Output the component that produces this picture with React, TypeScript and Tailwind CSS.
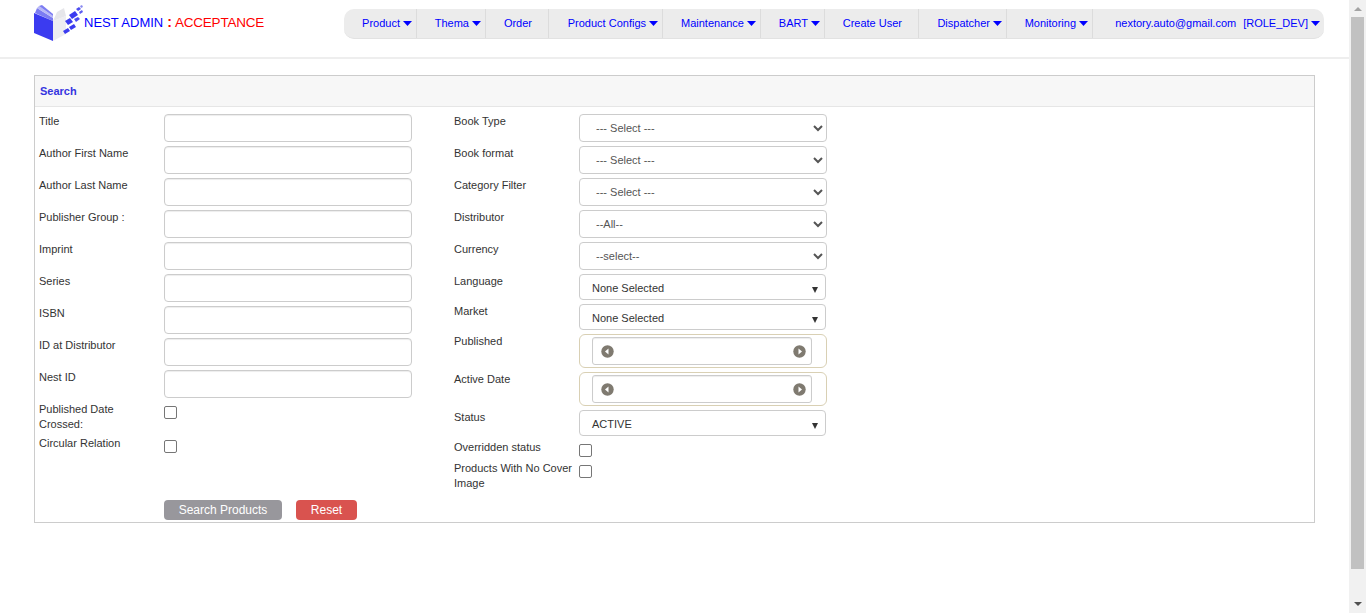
import React from "react";

const navItems = [
  { label: "Product", w: "w-[73px]", caret: true },
  { label: "Thema", w: "w-[69px]", caret: true },
  { label: "Order", w: "w-[63px]", caret: false },
  { label: "Product Configs", w: "w-[114px]", caret: true },
  { label: "Maintenance", w: "w-[98px]", caret: true },
  { label: "BART", w: "w-[64px]", caret: true },
  { label: "Create User", w: "w-[94px]", caret: false },
  { label: "Dispatcher", w: "w-[88px]", caret: true },
  { label: "Monitoring", w: "w-[86px]", caret: true },
];

const leftFields = [
  "Title",
  "Author First Name",
  "Author Last Name",
  "Publisher Group :",
  "Imprint",
  "Series",
  "ISBN",
  "ID at Distributor",
  "Nest ID",
];

const selectFields = [
  { label: "Book Type", value: "--- Select ---" },
  { label: "Book format", value: "--- Select ---" },
  { label: "Category Filter", value: "--- Select ---" },
  { label: "Distributor", value: "--All--" },
  { label: "Currency", value: "--select--" },
];

const Caret = () => (
  <svg width="9" height="5" viewBox="0 0 9 5" className="ml-[3px] shrink-0">
    <path d="M0 0h9L4.500 5z" fill="#0000ff" />
  </svg>
);

const Logo = () => (
  <svg width="52" height="38" viewBox="0 0 52 38" className="shrink-0">
    {/* right page */}
    <path d="M21 17L34 12V30L21 37z" fill="#ededf1" />
    <path d="M21 17L25 8L32 4L34 12z" fill="#e6e6ea" />
    {/* fanned pages */}
    <path d="M5 4L21 14V17L3 9z" fill="#7c7cf2" />
    <path d="M7 2L21 12V14L5 4z" fill="#b8b8f6" />
    <path d="M10 1L21 10V12L7 2z" fill="#7c7cf2" />
    {/* cover */}
    <path d="M2 9L21 17V37L2 29z" fill="#3b3bf0" />
    {/* scattered pixels */}
    <path d="M37 11l6-4 3 4-6 4z" fill="#3b3bf0" />
    <path d="M44 5l3-2 2 2-3 2z" fill="#4c4cf0" />
    <path d="M48 2l2-1 1 2-2 1z" fill="#8a8af0" />
    <path d="M47 8l3-2 1 2-3 2z" fill="#5c5cf0" />
    <path d="M33 17l5-3 3 4-5 3z" fill="#3b3bf0" />
    <path d="M42 15l4-2 2 2-4 3z" fill="#4c4cf0" />
    <path d="M37 23l5-3 2 3-5 3z" fill="#3b3bf0" />
    <path d="M31 27l5-3 2 3-5 3z" fill="#3b3bf0" />
  </svg>
);

const Label = ({ children }: { children: React.ReactNode }) => (
  <label className="block text-[11px] leading-[15px] text-[#333]">{children}</label>
);

const Check = () => (
  <span className="block w-[13px] h-[13px] rounded-[2px] border border-[#767676] bg-white" />
);

const NativeSelect = ({ value }: { value: string }) => (
  <select
    defaultValue={value}
    className="block w-[248px] h-[28px] px-3 text-[11px] text-[#555] bg-white border border-[#ccc] rounded-[4px]"
  >
    <option>{value}</option>
  </select>
);

const DropBox = ({ value }: { value: string }) => (
  <div className="flex items-center justify-between w-[247px] h-[26px] pl-3 pr-[7px] bg-white border border-[#ccc] rounded-[4px] text-[11px] text-[#333]">
    <span className="mt-[2px]">{value}</span>
    <span className="mt-[6px] w-0 h-0 border-x-[3px] border-t-[6px] border-x-transparent border-t-[#333]" />
  </div>
);

const RoundArrow = ({ dir }: { dir: "left" | "right" }) => (
  <svg width="13" height="13" viewBox="0 0 13 13">
    <circle cx="6.500" cy="6.500" r="6.200" fill="#7f7a70" />
    <path d={dir === "left" ? "M7.500 3.500v6L4 6.500z" : "M5.500 3.500v6L9 6.500z"} fill="#fff" />
  </svg>
);

const DatePick = () => (
  <div className="w-[248px] h-[34px] flex items-center pl-[12px] border border-[#d9d0b4] rounded-[6px] bg-white">
    <div className="w-[220px] h-[28px] flex items-center justify-between pl-[8px] pr-[5px] border border-[#ccc] rounded-[3px] shadow-[inset_0_1px_1px_rgba(0,0,0,0.075)]">
      <RoundArrow dir="left" />
      <RoundArrow dir="right" />
    </div>
  </div>
);

export default function App() {
  return (
    <div className="flex h-[613px] overflow-hidden bg-white font-['Liberation_Sans',Arial,sans-serif]">
      <div className="flex-1 min-w-0">
        <header className="flex h-[59px] pl-[32px] pr-[25px] border-b-2 border-[#eee]">
          <div className="flex h-[44px] items-start pt-[4px]">
            <Logo />
            <span className="mt-[9px] flex items-baseline leading-[18px] whitespace-nowrap">
              <span className="text-[13px] text-[#0000ff]">NEST ADMIN</span>
              <span className="ml-[4px] text-[14px] font-bold text-[#ff0000]">:</span>
              <span className="ml-[3px] text-[13.5px] tracking-[-0.2px] text-[#ff0000]">ACCEPTANCE</span>
            </span>
          </div>
          <nav className="ml-auto mt-[9px] flex h-[30px] w-[980px] rounded-[10px] bg-[#ececec] border-b border-[#e2e2e2] text-[11px] text-[#0000ff]">
            {navItems.map((item) => (
              <div
                key={item.label}
                className={`${item.w} flex items-center justify-end border-r border-[#dcdcdc] whitespace-nowrap ${item.caret ? "pr-[4px]" : "pr-[16px]"}`}
              >
                {item.label}
                {item.caret && <Caret />}
              </div>
            ))}
            <div className="flex-1 flex items-center justify-end pr-[4px] whitespace-nowrap">
              <span>nextory.auto@gmail.com</span>
              <span className="ml-[7px]">[ROLE_DEV]</span>
              <Caret />
            </div>
          </nav>
        </header>

        <section className="mx-[34px] mt-[16px] h-[448px] border border-[#ccc]">
          <div className="h-[31px] flex items-center pl-[5px] bg-[#f7f7f7] border-b border-[#e6e6e6] text-[11px] font-bold text-[#3535e0]">
            Search
          </div>
          <div className="flex pt-[7px]">
            <div className="w-[419px] pl-[4px] shrink-0">
              <div className="flex flex-col gap-1">
                {leftFields.map((f) => (
                  <div key={f} className="flex h-[28px]">
                    <div className="w-[125px]">
                      <Label>{f}</Label>
                    </div>
                    <input className="w-[248px] h-[28px] bg-white border border-[#ccc] rounded-[4px] shadow-[inset_0_1px_1px_rgba(0,0,0,0.075)]" />
                  </div>
                ))}
              </div>
              <div className="flex mt-[8px] h-[34px]">
                <div className="w-[125px] -mt-[4px]">
                  <Label>
                    Published Date
                    <br />
                    Crossed:
                  </Label>
                </div>
                <Check />
              </div>
              <div className="flex">
                <div className="w-[125px] -mt-[4px]">
                  <Label>Circular Relation</Label>
                </div>
                <Check />
              </div>
            </div>

            <div className="w-[373px] shrink-0">
              <div className="flex flex-col gap-1">
                {selectFields.map((f) => (
                  <div key={f.label} className="flex h-[28px]">
                    <div className="w-[125px]">
                      <Label>{f.label}</Label>
                    </div>
                    <NativeSelect value={f.value} />
                  </div>
                ))}
              </div>
              <div className="flex mt-[4px] h-[30px]">
                <div className="w-[125px]">
                  <Label>Language</Label>
                </div>
                <DropBox value="None Selected" />
              </div>
              <div className="flex h-[30px]">
                <div className="w-[125px]">
                  <Label>Market</Label>
                </div>
                <DropBox value="None Selected" />
              </div>
              <div className="flex h-[38px]">
                <div className="w-[125px]">
                  <Label>Published</Label>
                </div>
                <DatePick />
              </div>
              <div className="flex h-[38px]">
                <div className="w-[125px]">
                  <Label>Active Date</Label>
                </div>
                <DatePick />
              </div>
              <div className="flex h-[34px]">
                <div className="w-[125px]">
                  <Label>Status</Label>
                </div>
                <DropBox value="ACTIVE" />
              </div>
              <div className="flex h-[21px]">
                <div className="w-[125px] -mt-[4px]">
                  <Label>Overridden status</Label>
                </div>
                <Check />
              </div>
              <div className="flex">
                <div className="w-[125px] -mt-[4px]">
                  <Label>Products With No Cover Image</Label>
                </div>
                <Check />
              </div>
            </div>
          </div>
          <div className="flex gap-[14px] mt-[9px] pl-[129px]">
            <button className="w-[118px] h-[20px] rounded-[4px] bg-[#98979c] text-[12px] text-white">Search Products</button>
            <button className="w-[61px] h-[20px] rounded-[4px] bg-[#d9534f] text-[12px] text-white">Reset</button>
          </div>
        </section>
      </div>

      <aside className="w-[17px] shrink-0 flex flex-col bg-[#f1f1f1]">
        <div className="h-[17px] flex items-center justify-center">
          <span className="w-0 h-0 border-x-[4px] border-b-[4px] border-x-transparent border-b-[#a3a3a3]" />
        </div>
        <div className="h-[552px] mx-[2px] w-[13px] bg-[#c1c1c1]" />
        <div className="flex-1 flex items-end justify-center pb-[7px]">
          <span className="w-0 h-0 border-x-[4px] border-t-[4px] border-x-transparent border-t-[#505050]" />
        </div>
      </aside>
    </div>
  );
}
